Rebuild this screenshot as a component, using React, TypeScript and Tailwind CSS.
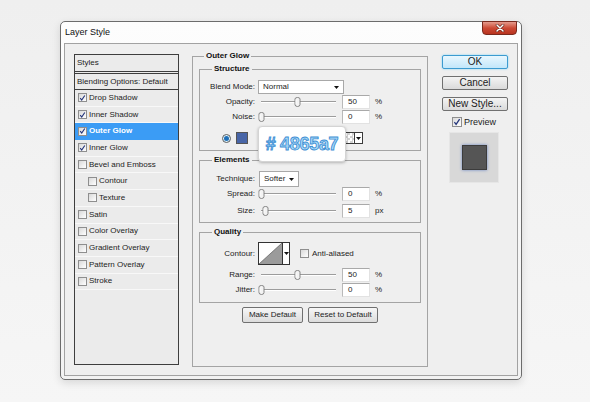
import React from 'react';

// Layer Style dialog (Outer Glow page)

type StyleItem = { name: string; on?: boolean; active?: boolean; sub?: boolean };

const styleItems: StyleItem[] = [
  { name: 'Drop Shadow', on: true },
  { name: 'Inner Shadow', on: true },
  { name: 'Outer Glow', on: true, active: true },
  { name: 'Inner Glow', on: true },
  { name: 'Bevel and Emboss' },
  { name: 'Contour', sub: true },
  { name: 'Texture', sub: true },
  { name: 'Satin' },
  { name: 'Color Overlay' },
  { name: 'Gradient Overlay' },
  { name: 'Pattern Overlay' },
  { name: 'Stroke' },
];

const Tick = () => (
  <svg viewBox="0 0 8 8" className="h-[8px] w-[8px]">
    <path d="M1.4 4.2 L3.1 6.3 L6.6 1.2" fill="none" stroke="#24357a" strokeWidth="1.3" />
  </svg>
);

const CheckBox = ({ on, big }: { on?: boolean; big?: boolean }) => (
  <span
    className={`flex shrink-0 items-center justify-center border border-[#8e8e8e] bg-linear-to-br from-[#d9d9d9] to-white ${big ? 'h-[10px] w-[10px]' : 'h-[9px] w-[9px]'}`}
  >
    {on && <Tick />}
  </span>
);

const Caret = () => (
  <svg viewBox="0 0 5 3" className="h-[3px] w-[5px]">
    <path d="M0 0 H5 L2.5 3 Z" fill="#111" />
  </svg>
);

const Group = ({ title, className = '', children }: { title: string; className?: string; children: React.ReactNode }) => (
  <fieldset className={`border border-[#a4a4a4] ${className}`}>
    <legend className="ml-[12px] px-[2px] text-[8px] font-bold leading-[10px] text-[#111]">{title}</legend>
    {children}
  </fieldset>
);

const Row = ({ label, className = '', children }: { label: string; className?: string; children: React.ReactNode }) => (
  <div className={`flex items-center ${className}`}>
    <span className="w-[55px] shrink-0 text-right">{label}</span>
    <div className="ml-[3px] flex items-center">{children}</div>
  </div>
);

const Slider = ({ pos }: { pos: number }) => (
  <div className="relative h-[14px] w-[80px]">
    <div className="absolute left-[3px] right-[2px] top-[6px] h-[2px] border-t border-[#9c9c9c] bg-white" />
    <svg
      viewBox="0 0 7 10"
      className="absolute top-[2px] h-[10px] w-[7px]"
      style={{ left: `${Math.round(pos * 72)}px` }}
    >
      <path d="M1 2 Q1 0.5 3.5 0.5 Q6 0.5 6 2 V7.5 Q6 9.5 3.5 9.5 Q1 9.5 1 7.5 Z" fill="#f3f3f3" stroke="#7c7c7c" strokeWidth="0.9" />
      <path d="M2 2.5 V7" stroke="#fff" strokeWidth="0.8" />
    </svg>
  </div>
);

const Field = ({ value }: { value: string }) => (
  <div className="ml-[4px] flex h-[14px] w-[28px] items-center border border-t-[#a9a9a9] border-l-[#b9b9b9] border-r-[#e2e2e2] border-b-[#e2e2e2] bg-white pl-[5px]">
    {value}
  </div>
);

const SliderRow = ({ label, pos, value, unit, className = '' }: { label: string; pos: number; value: string; unit: string; className?: string }) => (
  <Row label={label} className={`h-[14px] ${className}`}>
    <Slider pos={pos} />
    <Field value={value} />
    <span className="ml-[5px]">{unit}</span>
  </Row>
);

const Select = ({ value, w }: { value: string; w: string }) => (
  <div className={`flex items-center justify-between border border-[#a8a8a8] bg-white pl-[4px] pr-[4px] ${w}`}>
    <span>{value}</span>
    <Caret />
  </div>
);

const SmallButton = ({ label, w }: { label: string; w: string }) => (
  <button className={`flex h-[16px] items-center justify-center rounded-[2px] border border-[#707070] bg-linear-to-b from-[#f7f7f7] to-[#dcdcdc] text-[8px] ${w}`}>
    {label}
  </button>
);

const SideButton = ({ label, primary }: { label: string; primary?: boolean }) => (
  <button
    className={`flex h-[14px] w-[66px] items-center justify-center rounded-[2px] border text-[10px] leading-none ${
      primary
        ? 'border-[#3c9bd0] bg-linear-to-b from-[#e9f7fe] to-[#c2e7fa] shadow-[0_0_2px_#6fd0f8]'
        : 'border-[#707070] bg-linear-to-b from-[#f4f4f4] to-[#dadada]'
    }`}
  >
    {label}
  </button>
);

export default function App() {
  return (
    <div className="h-[402px] w-[590px] overflow-hidden bg-linear-to-b from-[#efefef] to-[#f6f6f6] pl-[60px] pt-[21px] font-['Liberation_Sans',Arial,sans-serif] text-[8px] leading-none text-[#1c1c1c]">
      <div className="flex h-[359px] w-[462px] flex-col rounded-[5px] border border-[#6c6c6c] bg-linear-to-b from-[#fdfdfd] to-[#f2f2f2] shadow-[0_3px_8px_rgba(0,0,0,0.12)]">
        {/* title bar */}
        <div className="flex h-[21px] shrink-0 items-start justify-between">
          <span className="pl-[4px] pt-[6px] text-[9px] text-[#111]">Layer Style</span>
          <button className="-mt-[1px] mr-[4px] flex h-[14px] w-[35px] items-center justify-center rounded-b-[4px] border border-[#7a2a1e] bg-linear-to-b from-[#e49a8c] via-[#cc4a35] to-[#b8331f]">
            <svg viewBox="0 0 10 8" className="h-[8px] w-[10px]">
              <path d="M2 1 L8 7 M8 1 L2 7" stroke="#5a1a10" strokeWidth="2.6" strokeLinecap="round" />
              <path d="M2 1 L8 7 M8 1 L2 7" stroke="#fff" strokeWidth="1.5" strokeLinecap="round" />
            </svg>
          </button>
        </div>

        {/* body */}
        <div className="mx-[3px] mb-[3px] flex flex-1 border border-[#a2a2a2] bg-[#efefef] pl-[9px] pt-[10px]">
          {/* styles list */}
          <div className="flex h-[311px] w-[105px] shrink-0 flex-col border border-[#3e3e3e] bg-[#ebebeb]">
            <div className="flex h-[17px] items-center border-b border-[#3e3e3e] pl-[2px]">Styles</div>
            <div className="mt-[1px] flex h-[17px] items-center border-y border-[#3e3e3e] pl-[2px]">Blending Options: Default</div>
            {styleItems.map((s) => (
              <div
                key={s.name}
                className={`flex h-[16.7px] shrink-0 items-center border-b ${s.active ? 'border-[#3b9cf5] bg-[#3b9cf5] font-bold text-white' : 'border-[#f8f8f8]'} ${s.sub ? 'pl-[13px]' : 'pl-[3px]'}`}
              >
                <CheckBox on={s.on} />
                <span className="ml-[2px]">{s.name}</span>
              </div>
            ))}
          </div>

          {/* outer glow */}
          <Group title="Outer Glow" className="ml-[13px] -mt-[3px] h-[316px] w-[236px] shrink-0 [&>legend]:ml-[11px]">
            <div className="px-[6px]">
              <Group title="Structure" className="mt-[3px] pb-[5px]">
                <Row label="Blend Mode:" className="mt-[6px] h-[14px]">
                  <Select value="Normal" w="h-[14px] w-[86px]" />
                </Row>
                <SliderRow label="Opacity:" pos={0.5} value="50" unit="%" className="mt-[1px]" />
                <SliderRow label="Noise:" pos={0} value="0" unit="%" className="mt-[1px]" />
                <div className="relative mt-[7px] flex h-[14px] items-center pl-[22px]">
                  <span className="flex h-[9px] w-[9px] items-center justify-center rounded-full border border-[#5e5e5e] bg-[#dff3fb]">
                    <span className="h-[5px] w-[5px] rounded-full bg-[#1f6fb8]" />
                  </span>
                  <span className="ml-[5px] h-[12px] w-[12px] border border-[#555] bg-[#4865a7]" />
                  <span className="ml-[10px] h-[9px] w-[9px] rounded-full border border-[#777] bg-white" />
                  <div className="ml-[3px] flex h-[12px] w-[93px] border border-[#3a3a3a]">
                    <span className="flex-1 bg-linear-to-r from-[#4865a7] to-white" />
                    <span className="w-[9px] bg-[repeating-conic-gradient(#d2d2d2_0_25%,#ffffff_0_50%)] bg-[length:5px_5px]" />
                    <span className="flex w-[8px] items-center justify-center border-l border-[#3a3a3a] bg-white">
                      <Caret />
                    </span>
                  </div>
                  <div className="absolute left-[58px] top-[-5px] flex h-[36px] w-[88px] items-center justify-center rounded-[4px] border border-[#d4d4d4] bg-white shadow-[0_1px_3px_rgba(0,0,0,0.25)]">
                    <span className="text-[18px] font-bold tracking-[-0.3px] text-[#a9daf8] [-webkit-text-stroke:0.9px_#3f8fd4]">
                      # 4865a7
                    </span>
                  </div>
                </div>
              </Group>

              <Group title="Elements" className="mt-[4px] pb-[4px]">
                <Row label="Technique:" className="mt-[6px] h-[16px]">
                  <Select value="Softer" w="ml-[1px] h-[16px] w-[40px]" />
                </Row>
                <SliderRow label="Spread:" pos={0} value="0" unit="%" />
                <SliderRow label="Size:" pos={0.06} value="5" unit="px" className="mt-[3px]" />
              </Group>

              <Group title="Quality" className="mt-[4px] pb-[5px]">
                <Row label="Contour:" className="mt-[5px] h-[23px]">
                  <div className="flex h-[23px] w-[32px] border border-[#333] bg-white">
                    <svg viewBox="0 0 23 21" preserveAspectRatio="none" className="h-[21px] w-[23px]">
                      <path d="M0 21 L23 0 L23 21 Z" fill="#9b9b9b" />
                      <path d="M0 21 L23 0" stroke="#5a5a5a" strokeWidth="0.7" />
                    </svg>
                    <span className="flex w-[7px] items-center justify-center border-l border-[#333]">
                      <Caret />
                    </span>
                  </div>
                  <span className="ml-[10px]">
                    <CheckBox />
                  </span>
                  <span className="ml-[3px]">Anti-aliased</span>
                </Row>
                <SliderRow label="Range:" pos={0.5} value="50" unit="%" className="mt-[3px]" />
                <SliderRow label="Jitter:" pos={0} value="0" unit="%" className="mt-[1px]" />
              </Group>

              <div className="mt-[4px] flex justify-center gap-[5px]">
                <SmallButton label="Make Default" w="w-[61px]" />
                <SmallButton label="Reset to Default" w="w-[70px]" />
              </div>
            </div>
          </Group>

          {/* right column */}
          <div className="ml-[14px] mt-[1px] flex w-[66px] shrink-0 flex-col">
            <SideButton label="OK" primary />
            <div className="mt-[7px]">
              <SideButton label="Cancel" />
            </div>
            <div className="mt-[7px]">
              <SideButton label="New Style..." />
            </div>
            <div className="mt-[6px] flex items-center pl-[10px] text-[9px]">
              <CheckBox on big />
              <span className="ml-[2px]">Preview</span>
            </div>
            <div className="ml-[7px] mt-[5px] flex h-[51px] w-[50px] items-center justify-center border border-[#e6e6e6] bg-[#d8d8d8]">
              <span className="h-[25px] w-[25px] border border-[#3c3c3c] bg-[#555] shadow-[0_0_3px_#6b86c4]" />
            </div>
          </div>
        </div>
      </div>
    </div>
  );
}
